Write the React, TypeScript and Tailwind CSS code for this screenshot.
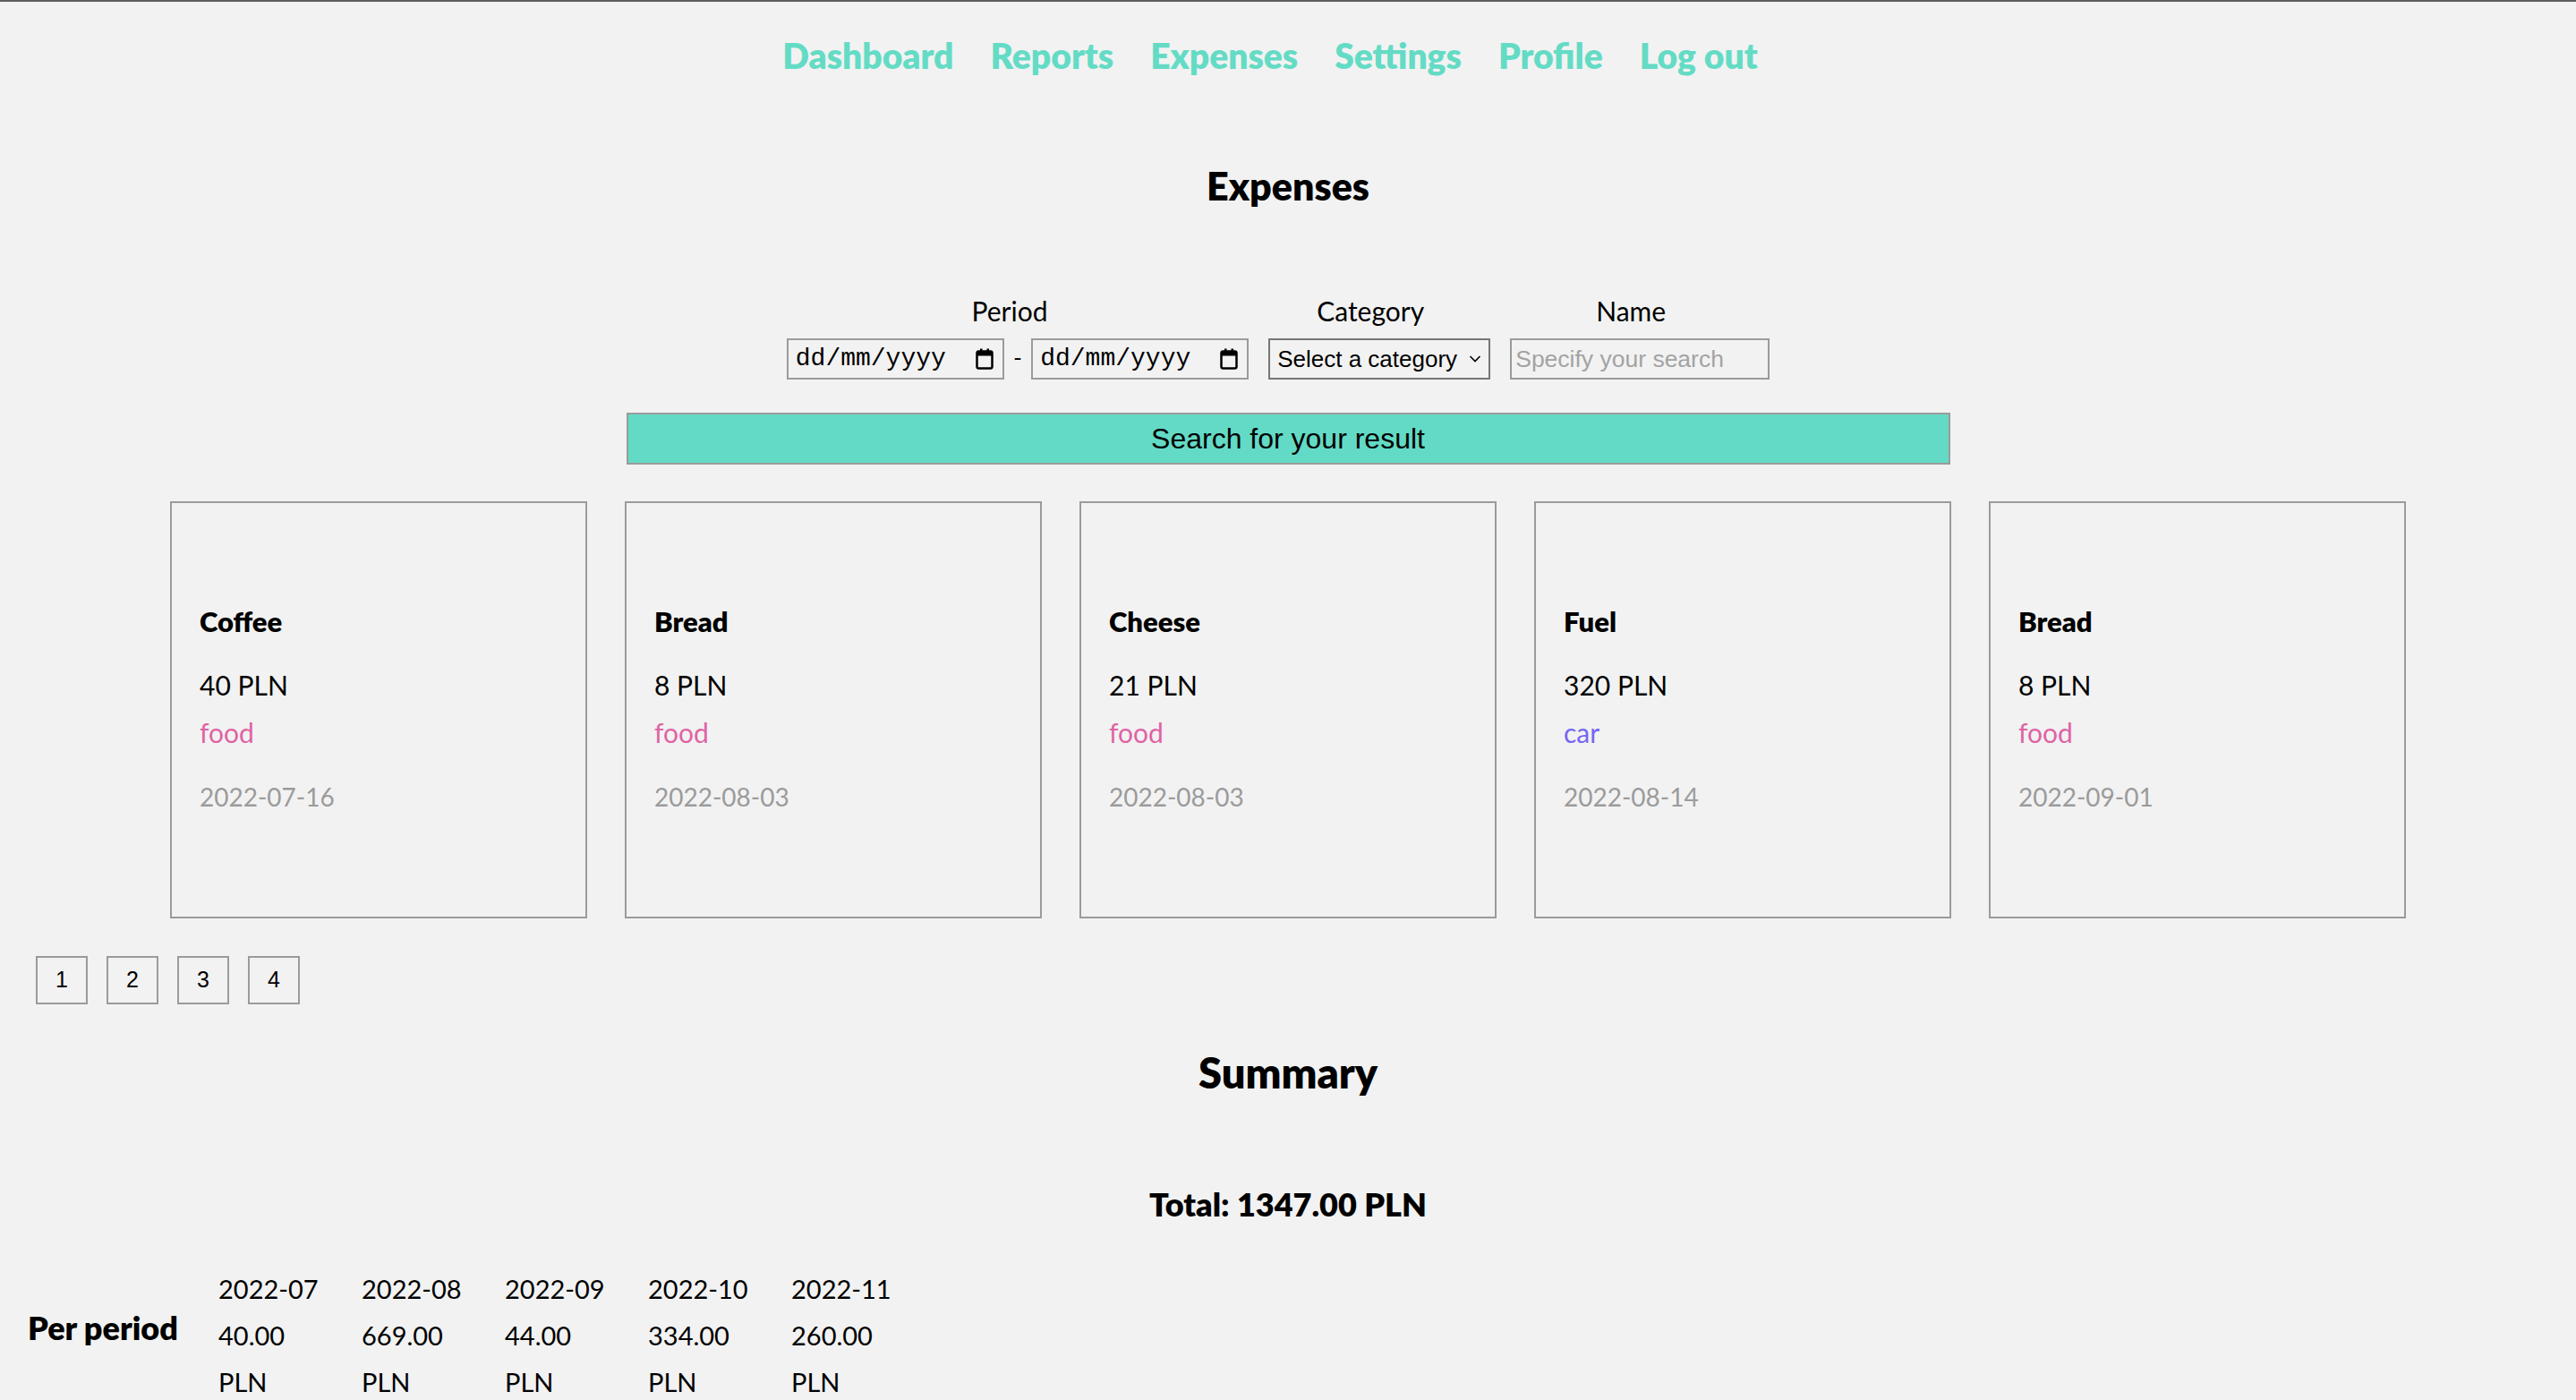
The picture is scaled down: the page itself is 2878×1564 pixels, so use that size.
const navLinks = ["Dashboard", "Reports", "Expenses", "Settings", "Profile", "Log out"];

const expenses = [
  { name: "Coffee", amount: "40 PLN", category: "food", date: "2022-07-16" },
  { name: "Bread", amount: "8 PLN", category: "food", date: "2022-08-03" },
  { name: "Cheese", amount: "21 PLN", category: "food", date: "2022-08-03" },
  { name: "Fuel", amount: "320 PLN", category: "car", date: "2022-08-14" },
  { name: "Bread", amount: "8 PLN", category: "food", date: "2022-09-01" },
];

const periods = [
  { month: "2022-07", total: "40.00" },
  { month: "2022-08", total: "669.00" },
  { month: "2022-09", total: "44.00" },
  { month: "2022-10", total: "334.00" },
  { month: "2022-11", total: "260.00" },
];

function CalendarIcon() {
  return (
    <svg width="20" height="24" viewBox="0 0 20 24" className="shrink-0">
      <rect x="1.5" y="3.5" width="17" height="19" rx="2" fill="none" stroke="#000" strokeWidth="2.5" />
      <rect x="1.5" y="3.5" width="17" height="5" fill="#000" />
      <rect x="5" y="0.5" width="2.5" height="4" fill="#000" />
      <rect x="12.5" y="0.5" width="2.5" height="4" fill="#000" />
    </svg>
  );
}

function DateField() {
  return (
    <div className="flex items-center justify-between w-[243px] h-[46px] border-2 border-[#9b9b9b] pl-[8px] pr-[10px]">
      <span className="font-['Liberation_Mono',monospace] text-[28px] leading-none text-black">dd/mm/yyyy</span>
      <CalendarIcon />
    </div>
  );
}

function ExpenseCard({ item }: { item: (typeof expenses)[number] }) {
  return (
    <div className="w-[466px] h-[466px] border-2 border-[#9b9b9b] pl-[31px] pt-[112px] flex flex-col">
      <div className="text-[31px] leading-[40px] font-extrabold text-black">{item.name}</div>
      <div className="mt-[31px] text-[30px] leading-[40px] text-black">{item.amount}</div>
      <div
        className={
          item.category === "car"
            ? "mt-[13px] text-[30px] leading-[40px] text-[#7466f0]"
            : "mt-[13px] text-[30px] leading-[40px] text-[#df63a4]"
        }
      >
        {item.category}
      </div>
      <div className="mt-[32px] text-[28px] leading-[40px] text-[#9b9b9b]">{item.date}</div>
    </div>
  );
}

export default function App() {
  return (
    <div className="min-h-screen bg-[#f2f2f2] border-t-2 border-[#5f5f5f] font-['Lato',sans-serif] text-black overflow-hidden">
      {/* Navigation */}
      <nav className="flex justify-center gap-[41px] pt-[37px] pr-[40px]">
        {navLinks.map((link) => (
          <a key={link} className="text-[39px] leading-[46px] font-extrabold text-[#64dbc5]">
            {link}
          </a>
        ))}
      </nav>

      <h1 className="mt-[96px] text-center text-[43px] leading-[54px] font-extrabold">Expenses</h1>

      {/* Filters */}
      <div className="mt-[94px] flex justify-center items-end gap-[22px] pr-[22px]">
        <div className="flex flex-col items-center">
          <label className="text-[30px] leading-[36px] pr-[18px]">Period</label>
          <div className="mt-[13px] flex items-center gap-[8px]">
            <DateField />
            <span className="font-['Liberation_Mono',monospace] text-[24px] leading-none">-</span>
            <DateField />
          </div>
        </div>
        <div className="flex flex-col items-center">
          <label className="text-[30px] leading-[36px] pr-[20px]">Category</label>
          <div className="mt-[13px] flex items-center justify-between w-[248px] h-[46px] border-2 border-[#767676] pl-[8px] pr-[8px]">
            <span className="font-['Liberation_Sans',Arial,sans-serif] text-[26px] leading-none">Select a category</span>
            <svg width="14" height="10" viewBox="0 0 14 10">
              <path d="M1.5 2 L7 7.5 L12.5 2" fill="none" stroke="#000" strokeWidth="1.6" />
            </svg>
          </div>
        </div>
        <div className="flex flex-col items-center">
          <label className="text-[30px] leading-[36px] pr-[20px]">Name</label>
          <input
            placeholder="Specify your search"
            className="mt-[13px] w-[290px] h-[46px] border-2 border-[#9b9b9b] bg-transparent px-[4px] font-['Liberation_Sans',Arial,sans-serif] text-[26.5px] placeholder:text-[#a3a3a3] outline-none"
          />
        </div>
      </div>

      <div className="mt-[37px] flex justify-center">
        <button className="w-[1479px] h-[58px] bg-[#63dac5] border-2 border-[#9b9b9b] font-['Liberation_Sans',Arial,sans-serif] text-[32px] text-black">
          Search for your result
        </button>
      </div>

      {/* Cards */}
      <div className="mt-[41px] flex justify-center gap-[42px]">
        {expenses.map((item, i) => (
          <ExpenseCard key={i} item={item} />
        ))}
      </div>

      {/* Pagination */}
      <div className="mt-[42px] pl-[40px] flex gap-[21px]">
        {[1, 2, 3, 4].map((n) => (
          <button
            key={n}
            className="w-[58px] h-[54px] border-2 border-[#9b9b9b] flex items-center justify-center font-['Liberation_Sans',Arial,sans-serif] text-[25px]"
          >
            {n}
          </button>
        ))}
      </div>

      <h2 className="mt-[48px] text-center text-[47px] leading-[56px] font-extrabold">Summary</h2>

      <div className="mt-[98px] text-center text-[36px] leading-[42px] font-extrabold">Total: 1347.00 PLN</div>

      {/* Per period */}
      <div className="mt-[48px] flex items-center pl-[31px]">
        <div className="w-[213px] text-[36px] leading-[42px] font-extrabold -mt-[18px]">Per period</div>
        <div className="flex">
          {periods.map((p) => (
            <div key={p.month} className="w-[160px] flex flex-col text-[29px] leading-[52px]">
              <span>{p.month}</span>
              <span>{p.total}</span>
              <span>PLN</span>
            </div>
          ))}
        </div>
      </div>
    </div>
  );
}
